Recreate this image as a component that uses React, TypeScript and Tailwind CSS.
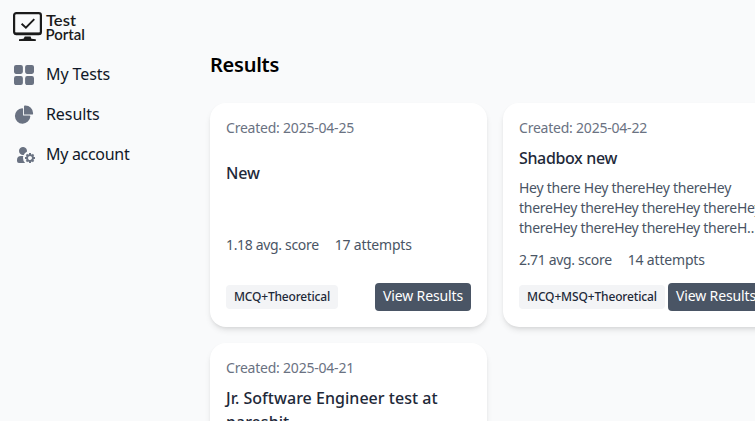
type CardData = {
  date: string;
  title: string;
  titleClass: string;
  description?: string;
  score: string;
  attempts: string;
  kind: string;
  kindClass: string;
};

const cards: CardData[] = [
  {
    date: "2025-04-25",
    title: "New",
    titleClass: "mt-[23px] mb-[50px] tracking-[-0.2px]",
    score: "1.18",
    attempts: "17",
    kind: "MCQ+Theoretical",
    kindClass: "tracking-[-0.18px]",
  },
  {
    date: "2025-04-22",
    title: "Shadbox new",
    titleClass: "mt-2 tracking-[-0.36px]",
    description:
      "Hey there Hey thereHey thereHey thereHey thereHey thereHey thereHey thereHey thereHey thereHey thereH…",
    score: "2.71",
    attempts: "14",
    kind: "MCQ+MSQ+Theoretical",
    kindClass: "tracking-[-0.14px]",
  },
  {
    date: "2025-04-21",
    title: "Jr. Software Engineer test at pareshit",
    titleClass: "mt-2 mb-10 tracking-[0.03px]",
    score: "3.20",
    attempts: "9",
    kind: "MCQ+Theoretical",
    kindClass: "tracking-[-0.18px]",
  },
];

function Logo() {
  return (
    <svg width="76" height="32" viewBox="0 0 76 32" className="block">
      <g fill="none" stroke="#1b1b1b">
        <rect x="2.100" y="3.100" width="26.800" height="21" rx="2.200" strokeWidth="2.200" />
        <path d="M2.500 23.600h26" strokeWidth="2.400" />
        <path d="M9.600 13.800l4.300 3.900 8.400-8.600" strokeWidth="1.900" />
      </g>
      <path d="M12.800 26.500h5.800l.8 2.300 4.400.5v1.700H7v-1.700l4.500-.5z" fill="#1b1b1b" />
      <g fill="#1b1b1b" className="font-['Lato',sans-serif] text-[14.700px] font-semibold">
        <text x="34" y="15.600" textLength="30" lengthAdjust="spacingAndGlyphs">Test</text>
        <text x="33.500" y="29.600" textLength="39.500" lengthAdjust="spacingAndGlyphs">Portal</text>
      </g>
    </svg>
  );
}

function GridIcon() {
  return (
    <svg className="mt-0.5 h-5 w-5 text-gray-500" viewBox="0 0 18 18" fill="currentColor">
      <path d="M6.143 0H1.857A1.857 1.857 0 0 0 0 1.857v4.286C0 7.169.831 8 1.857 8h4.286A1.857 1.857 0 0 0 8 6.143V1.857A1.857 1.857 0 0 0 6.143 0Zm10 0h-4.286A1.857 1.857 0 0 0 10 1.857v4.286C10 7.169 10.831 8 11.857 8h4.286A1.857 1.857 0 0 0 18 6.143V1.857A1.857 1.857 0 0 0 16.143 0Zm-10 10H1.857A1.857 1.857 0 0 0 0 11.857v4.286C0 17.169.831 18 1.857 18h4.286A1.857 1.857 0 0 0 8 16.143v-4.286A1.857 1.857 0 0 0 6.143 10Zm10 0h-4.286A1.857 1.857 0 0 0 10 11.857v4.286c0 1.026.831 1.857 1.857 1.857h4.286A1.857 1.857 0 0 0 18 16.143v-4.286A1.857 1.857 0 0 0 16.143 10Z" />
    </svg>
  );
}

function PieIcon() {
  return (
    <svg className="mt-0.5 h-5 w-5 text-gray-500" viewBox="0 0 22 21" fill="currentColor">
      <path d="M16.975 11H10V4.025a1 1 0 0 0-1.066-.998 8.500 8.500 0 1 0 9.039 9.039.999.999 0 0 0-1-1.066h.002Z" />
      <path d="M12.500 0c-.157 0-.311.010-.565.027A1 1 0 0 0 11 1.020V10h8.975a1 1 0 0 0 1-.935c.013-.188.028-.374.028-.565A8.510 8.510 0 0 0 12.500 0Z" />
    </svg>
  );
}

function AccountIcon() {
  return (
    <svg className="mt-0.5 h-6 w-6 text-gray-500" viewBox="0 0 24 24" fill="currentColor">
      <path
        fillRule="evenodd"
        clipRule="evenodd"
        d="M17 10v1.126c.367.095.714.240 1.032.428l.796-.797 1.415 1.415-.797.796c.188.318.333.665.428 1.032H21v2h-1.126c-.095.367-.240.714-.428 1.032l.797.796-1.415 1.415-.796-.797a3.979 3.979 0 0 1-1.032.428V20h-2v-1.126a3.977 3.977 0 0 1-1.032-.428l-.796.797-1.415-1.415.797-.796A3.975 3.975 0 0 1 12.126 16H11v-2h1.126c.095-.367.240-.714.428-1.032l-.797-.796 1.415-1.415.796.797A3.977 3.977 0 0 1 15 11.126V10h2Zm.406 3.578.016.016c.354.358.574.850.578 1.392v.028a2 2 0 0 1-3.409 1.406l-.010-.012a2 2 0 0 1 2.826-2.830ZM5 8a4 4 0 1 1 7.938.703 7.029 7.029 0 0 0-3.235 3.235A4 4 0 0 1 5 8Zm4.290 5H7a4 4 0 0 0-4 4v1a2 2 0 0 0 2 2h6.101l-.006-.003A7 7 0 0 1 9 15c0-.695.101-1.366.290-2Z"
      />
    </svg>
  );
}

function Sidebar() {
  return (
    <aside className="w-[194px] shrink-0 pl-3 pt-2.5">
      <Logo />
      <nav className="mt-3 text-base text-gray-900">
        <a className="flex h-10 items-center pl-0.5">
          <GridIcon />
          <span className="ml-3 tracking-[-0.08px]">My Tests</span>
        </a>
        <a className="flex h-10 items-center pl-0.5">
          <PieIcon />
          <span className="ml-3 tracking-[-0.08px]">Results</span>
        </a>
        <a className="flex h-10 items-center pl-0.5">
          <AccountIcon />
          <span className="ml-2 tracking-[-0.3px]">My account</span>
        </a>
      </nav>
    </aside>
  );
}

function Card({ card }: { card: CardData }) {
  return (
    <article className="flex h-56 flex-col rounded-2xl bg-white px-4 pb-4 pt-[15px] shadow-md">
      <p className="text-sm tracking-[-0.22px] text-gray-500">Created: {card.date}</p>
      <h2 className={`text-base font-medium text-gray-800 ${card.titleClass}`}>{card.title}</h2>
      {card.description && (
        <p className="mb-3 mt-2 text-sm tracking-[-0.26px] text-gray-600">{card.description}</p>
      )}
      <div className="flex gap-4 text-sm text-gray-600">
        <span className="tracking-[-0.33px]">{card.score} avg. score</span>
        <span className="tracking-[-0.18px]">{card.attempts} attempts</span>
      </div>
      <div className="mt-auto flex items-center justify-between">
        <span className={`rounded bg-gray-100 px-2 py-1 text-xs font-medium text-gray-800 ${card.kindClass}`}>
          {card.kind}
        </span>
        <button className="shrink-0 rounded bg-gray-600 px-2 pb-[5px] pt-[3px] text-sm tracking-[-0.13px] text-white">
          View Results
        </button>
      </div>
    </article>
  );
}

export default function App() {
  return (
    <div className="flex h-[421px] w-full overflow-hidden bg-gray-50 font-['Noto_Sans',sans-serif]">
      <Sidebar />
      <main className="shrink-0 px-4 pt-[51px]">
        <h1 className="text-xl font-semibold tracking-[-0.25px] text-black">Results</h1>
        <div className="mt-6 grid grid-cols-[277px_277px] gap-4">
          {cards.map((card) => (
            <Card key={card.date} card={card} />
          ))}
        </div>
      </main>
    </div>
  );
}
